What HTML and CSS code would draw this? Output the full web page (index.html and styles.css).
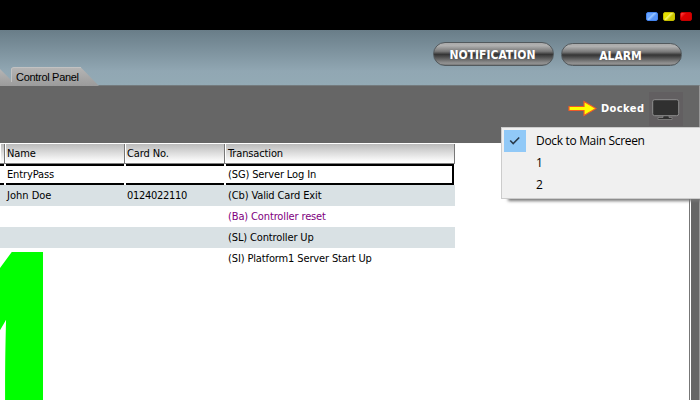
FILE: index.html
```html
<!DOCTYPE html>
<html lang="en">
<head>
<meta charset="utf-8">
<title>Control Panel</title>
<link rel="stylesheet" href="styles.css">
</head>
<body>
<div class="titlebar"><i class="win blue"></i><i class="win yellow"></i><i class="win red"></i></div>
<header class="banner">
  <svg class="tabs" width="110" height="19" viewBox="0 0 110 19">
    <defs><linearGradient id="tab" x1="0" y1="0" x2="0" y2="1"><stop offset="0" stop-color="#b5b5b5"/><stop offset="1" stop-color="#9b9b9b"/></linearGradient></defs>
    <path d="M0 2L17 19H0Z" fill="url(#tab)"/>
    <path d="M11 15V2Q11 .5 13 .5H81L99 19H15Z" fill="url(#tab)"/>
    <path d="M11.5 15V2Q12 .5 14 .5H81" fill="none" stroke="#c2c2c2"/>
  </svg>
  <span class="tab-label">Control Panel</span>
  <div class="buttons">
    <button class="pill notify"><span>NOTIFICATION</span></button>
    <button class="pill alarm"><span>ALARM</span></button>
  </div>
</header>
<section class="toolbar">
  <svg class="arrow" width="29" height="17" viewBox="0 0 29 17"><path d="M1 6.5H16V1.5L28 8.5L16 15.5V10.5H1Z" fill="#ff0" stroke="#f05a28" stroke-width="1.2"/></svg>
  <span class="docked">Docked</span>
  <div class="monitor"><svg width="28" height="22" viewBox="0 0 28 22"><path d="M11 16H17V18.5H20V20.5H6V18.5H11Z" fill="#303030" stroke="#8e8e8e" stroke-width=".7"/><rect x=".7" y=".7" width="26" height="16" rx="2" fill="#303030" stroke="#8e8e8e"/></svg></div>
</section>
<main class="workspace">
  <div class="content">
    <div class="grid">
      <div class="row head"><span></span><span>Name</span><span>Card No.</span><span>Transaction</span></div>
      <div class="row selected"><span></span><span>EntryPass</span><span></span><span>(SG) Server Log In</span></div>
      <div class="row shade"><span></span><span class="john">John Doe</span><span class="num">0124022110</span><span>(Cb) Valid Card Exit</span></div>
      <div class="row purple"><span></span><span></span><span></span><span>(Ba) Controller reset</span></div>
      <div class="row shade"><span></span><span></span><span></span><span>(SL) Controller Up</span></div>
      <div class="row"><span></span><span></span><span></span><span>(SI) Platform1 Server Start Up</span></div>
    </div>
    <div class="counter"><span>1</span></div>
  </div>
</main>
<div class="menu">
  <div class="item"><i class="check"><svg width="12" height="10" viewBox="0 0 12 10"><path d="M1.2 4.5L4.2 7.5L10.2 1.5" fill="none" stroke="#293a4b" stroke-width="1.6"/></svg></i><span>Dock to Main Screen</span></div>
  <div class="item"><i></i><span>1</span></div>
  <div class="item"><i></i><span>2</span></div>
</div>
</body>
</html>
```

FILE: styles.css
```css
* { box-sizing: border-box; }
body { margin: 0; width: 700px; height: 400px; overflow: hidden; position: relative; display: flex; flex-direction: column; background: #666; font: 11px/20px "DejaVu Sans Condensed", "DejaVu Sans", sans-serif; color: #000; }
.titlebar { height: 30px; flex: none; background: #000; display: flex; gap: 5px; padding: 12px 8px 0 0; justify-content: flex-end; }
.win { width: 12px; height: 9px; border-radius: 2px; }
.blue { background: linear-gradient(135deg, #69a5ff 35%, #9bc8ff 45%, #5693f5 65%); border: 1px solid #4484ee; }
.yellow { background: linear-gradient(135deg, #e5e000 35%, #f5f46d 45%, #cec900 65%); border: 1px solid #c5bd00; }
.red { background: linear-gradient(135deg, #ff4545 5%, #e00000 35%, #d00000); border: 1px solid #c50000; }
.banner { height: 55px; flex: none; display: flex; align-items: flex-end; background: linear-gradient(#697d88, #91a7b3 75%, #93aab5); position: relative; }
.tabs { display: block; height: 19px; width: 110px; margin-bottom: -1px; position: relative; z-index: 1; }
.tab-label { position: absolute; left: 16px; top: 37px; z-index: 2; font: 11px/20px "Liberation Sans", sans-serif; letter-spacing: -.3px; white-space: nowrap; }
.buttons { display: flex; gap: 7px; align-items: flex-end; margin: 0 18px 19px auto; }
.pill { width: 121px; height: 24px; padding: 0; border: 1px solid #52595d; border-radius: 12px; background: linear-gradient(#aaa 0, #b0b0b0 12%, #777 38%, #353535 52%, #454545 60%, #939393 92%, #777); color: #fff; font: bold 12px/22px "DejaVu Sans Condensed", sans-serif; white-space: nowrap; }
.pill span { position: relative; left: -1px; top: 1px; }
.alarm { height: 23px; }
.toolbar { height: 58px; flex: none; display: flex; border-top: 1px solid #747b7e; border-right: 1px solid #999; background: #666; padding: 6px 16px 0 0; justify-content: flex-end; }
.arrow { margin-top: 8px; margin-right: 4px; }
.docked { color: #fff; font: bold 11px/33px "DejaVu Sans Condensed", sans-serif; letter-spacing: .4px; width: 45px; white-space: nowrap; }
.monitor { width: 34px; height: 34px; margin-left: 3px; padding: 7px 3px; background: #625f61; }
.monitor svg { display: block; }
.workspace { flex: 1; border-top: 1px solid #fff; border-right: 1px solid #999; padding-right: 8px; min-height: 0; }
.content { height: 100%; background: #fff; border-right: 1px solid #fff; overflow: hidden; box-shadow: inset -1px 0 #777; }
.grid { width: 455px; letter-spacing: -.13px; }
.row { height: 21px; display: grid; grid-template-columns: 5px 120px 100px 230px; line-height: 21px; }
.row span { padding-left: 2px; white-space: nowrap; }
.row span:nth-child(4) { padding-left: 3px; }
.row .num { letter-spacing: -.3px; }
.row .john { letter-spacing: 0; }
.head { height: 20px; border-bottom: 1px solid #808080; background: linear-gradient(#bbb, #fff 95%); line-height: 19px; }
.head span { border-right: 1px solid #777; box-shadow: inset 1px 0 #fff; }
.selected { border-bottom: 1px solid #fff; line-height: 17px; background: #fff; }
.selected span { border-top: 2px solid #000; border-bottom: 2px solid #000; margin-right: 1px; }
.selected span + span { margin-left: 1px; padding-left: 1px; }
.selected span:nth-child(4) { border-right: 2px solid #000; padding-left: 2px; }
.shade { background: #d9e1e4; }
.purple { color: #800080; }
.counter { width: 43px; height: 148px; margin-top: -17px; overflow: hidden; position: relative; }
.counter span { position: absolute; left: -61px; top: 103px; font: bold 252px/252px "Open Sans", sans-serif; color: #0f0; transform: scaleY(1.7); transform-origin: 0 100%; }
.menu { position: absolute; left: 501px; top: 127px; width: 200px; height: 72px; border: 1px solid #ccc; background: #f0f0f0; padding: 2px; box-shadow: 5px 4px 3px -2px #777; font: 12px/22px "Open Sans", sans-serif; letter-spacing: -.32px; }
.item { height: 22px; display: flex; gap: 10px; white-space: nowrap; }
.item i { width: 22px; height: 22px; display: grid; place-items: center; }
.item .check { background: #91c9f7; }
```
